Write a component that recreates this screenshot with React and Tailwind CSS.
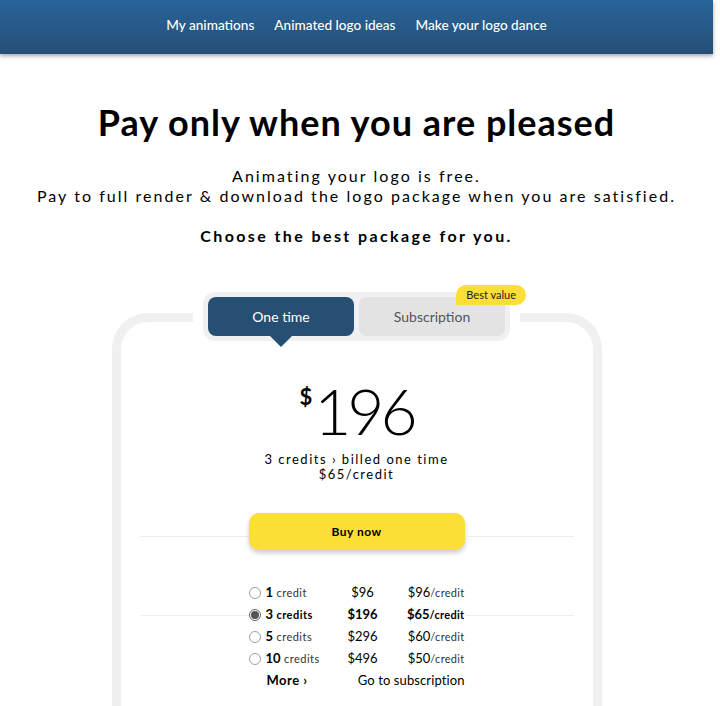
import React, { useState } from "react";

const navLinks = ["My animations", "Animated logo ideas", "Make your logo dance"];

const packages = [
  { qty: 1, unit: "credit", price: "$96", per: "$96" },
  { qty: 3, unit: "credits", price: "$196", per: "$65" },
  { qty: 5, unit: "credits", price: "$296", per: "$60" },
  { qty: 10, unit: "credits", price: "$496", per: "$50" },
];

const Radio = ({ checked }) => (
  <span
    className={
      "inline-flex h-[12px] w-[12px] shrink-0 items-center justify-center rounded-full border " +
      (checked ? "border-[#666] bg-white" : "border-[#a0a0a0] bg-white")
    }
  >
    {checked && <span className="h-[8px] w-[8px] rounded-full bg-[#555]" />}
  </span>
);

const App = () => {
  const [selected, setSelected] = useState(3);
  const current = packages.find((p) => p.qty === selected);

  return (
    <div className="min-h-screen bg-white text-black" style={{ fontFamily: "Lato, 'Noto Sans', sans-serif" }}>
      <div className="w-[713px]">
        {/* top nav */}
        <header className="flex h-[54px] items-center justify-center gap-[20px] bg-gradient-to-b from-[#27649a] to-[#274f76] pb-[3px] shadow-[0_2px_4px_rgba(0,0,0,0.35)]">
          {navLinks.map((l) => (
            <a key={l} className="text-[13.6px] font-medium text-white">
              {l}
            </a>
          ))}
        </header>

        <h1 className="mt-[48px] text-center text-[36px] font-bold leading-[40px] tracking-[1px]">
          Pay only when you are pleased
        </h1>

        <p className="mt-[24px] text-center text-[16px] leading-[20px] tracking-[2.05px]">
          Animating your logo is free.
          <br />
          Pay to full render &amp; download the logo package when you are satisfied.
        </p>

        <p className="mt-[20px] text-center text-[16px] font-bold leading-[20px] tracking-[2.4px]">
          Choose the best package for you.
        </p>

        {/* pricing card */}
        <div className="mx-auto mt-[67px] w-[490px] rounded-t-[36px] border-[9px] border-b-0 border-[#f0f0f0] pb-[40px]">
          <div className="-mt-[30px] flex justify-center">
            <div className="bg-white px-[10px]">
              <div className="relative flex gap-[5px] rounded-[12px] bg-[#f0f0f0] p-[5px]">
                <button className="relative flex h-[39px] w-[146px] items-center justify-center rounded-[8px] bg-[#274f73] text-[14px] text-white">
                  One time
                  <span className="absolute left-1/2 top-[38px] h-0 w-0 -translate-x-1/2 border-x-[12px] border-t-[12px] border-x-transparent border-t-[#274f73]" />
                </button>
                <button className="flex h-[39px] w-[146px] items-center justify-center rounded-[8px] bg-[#e3e3e3] text-[14px] text-[#555]">
                  Subscription
                </button>
                <span className="absolute -right-[16px] -top-[7px] rounded-[10px] rounded-bl-none bg-[#fbdf34] px-[10px] py-[3px] text-[11px] leading-[14px] text-[#222]">
                  Best value
                </span>
              </div>
            </div>
          </div>

          {/* price */}
          <div className="mt-[42px] flex justify-center">
            <span className="mr-[2px] mt-[3px] text-[22px] font-bold leading-[22px]">$</span>
            <span className="text-[64px] font-light leading-[56px] tracking-[-4px]">196</span>
          </div>
          <p className="mt-[13px] text-center text-[13px] leading-[15px] tracking-[1.5px]">
            {current.qty} credits › billed one time
            <br />
            {current.per}/credit
          </p>

          <div className="mt-[31px] flex items-center px-[19px]">
            <span className="mt-[9px] h-px flex-1 bg-[#ececec]" />
            <button className="h-[37px] w-[216px] rounded-[10px] bg-[#fbdf34] text-[12px] font-bold tracking-[0.5px] shadow-[0_3px_5px_rgba(0,0,0,0.2)]">
              Buy now
            </button>
            <span className="mt-[9px] h-px flex-1 bg-[#ececec]" />
          </div>

          {/* package list */}
          <div className="mt-[32px]">
            {packages.map((p) => {
              const on = p.qty === selected;
              return (
                <div key={p.qty} className="flex items-center px-[19px]">
                  <span className={"h-px flex-1 " + (on ? "bg-[#efefef]" : "bg-transparent")} />
                  <div
                    onClick={() => setSelected(p.qty)}
                    className="flex h-[22px] w-[216px] cursor-pointer items-center text-[13px]"
                  >
                    <div className="flex w-[92px] items-center gap-[5px]">
                      <Radio checked={on} />
                      <span>
                        <b>{p.qty}</b>{" "}
                        <span className={"text-[11px] tracking-[0.5px] " + (on ? "font-bold" : "text-[#333]")}>{p.unit}</span>
                      </span>
                    </div>
                    <span className={"w-[44px] text-center " + (on ? "font-bold" : "")}>{p.price}</span>
                    <span className="flex-1 text-right">
                      <span className={on ? "font-bold" : ""}>{p.per}</span>
                      <span className={"text-[11px] tracking-[0.3px] " + (on ? "font-bold" : "text-[#333]")}>/credit</span>
                    </span>
                  </div>
                  <span className={"h-px flex-1 " + (on ? "bg-[#efefef]" : "bg-transparent")} />
                </div>
              );
            })}
            <div className="mx-auto flex h-[22px] w-[216px] items-center justify-between pl-[18px] text-[13px]">
              <span className="font-bold tracking-[0.5px]">More ›</span>
              <span className="tracking-[0.1px]">Go to subscription</span>
            </div>
          </div>
        </div>
      </div>
    </div>
  );
};

export default App;
